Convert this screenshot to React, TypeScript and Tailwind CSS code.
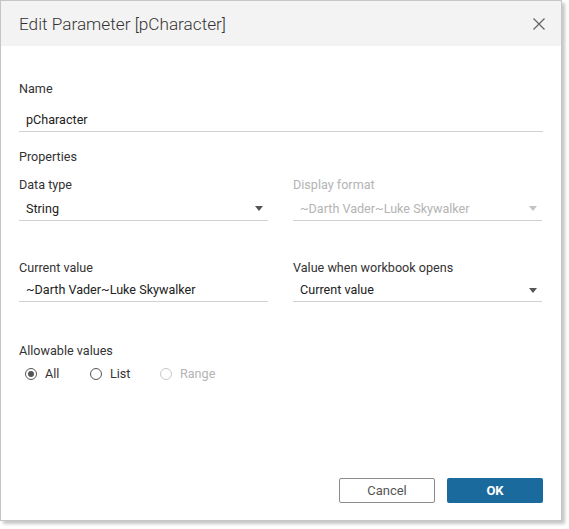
export default function App() {
  const font = { fontFamily: 'Roboto, "Liberation Sans", sans-serif' };

  const Arrow = ({ muted = false }: { muted?: boolean }) => (
    <svg width="8" height="5" viewBox="0 0 8 5" className="shrink-0">
      <path d="M0 0H8L4 5Z" fill={muted ? '#c4c4c4' : '#555555'} />
    </svg>
  );

  const Radio = ({ label, checked = false, disabled = false, width }: { label: string; checked?: boolean; disabled?: boolean; width: string }) => (
    <div className={`flex items-center gap-[8px] ${width}`}>
      <span
        className={`w-[12px] h-[12px] rounded-full border flex items-center justify-center ${
          disabled ? 'border-[#c8c8c8]' : 'border-[#555]'
        }`}
      >
        {checked && <span className="w-[6px] h-[6px] rounded-full bg-[#555]" />}
      </span>
      <span className={disabled ? 'text-[#b4b4b4]' : 'text-[#333]'}>{label}</span>
    </div>
  );

  return (
    <div className="w-[569px] h-[529px] bg-white" style={font}>
      <div className="w-[562px] h-[521px] border border-[#c6c6c6] bg-white flex flex-col shadow-[3px_3px_3px_rgba(0,0,0,0.22)] text-[12.6px] leading-[16px] text-[#333]">
        {/* Header */}
        <div className="h-[45px] bg-[#f3f3f3] flex items-center justify-between pl-[18px] pr-[12px] shrink-0">
          <span className="text-[17.2px] font-light text-[#333]">Edit Parameter [pCharacter]</span>
          <svg width="12" height="12" viewBox="0 0 12 12" className="mr-[4px]">
            <path d="M0.5 0.5L11.5 11.5M11.5 0.5L0.5 11.5" stroke="#666" strokeWidth="1.3" />
          </svg>
        </div>

        {/* Body */}
        <div className="flex-1 px-[18px]">
          <div className="mt-[35px]">Name</div>
          <div className="mt-[11px] h-[24px] border-b border-[#d0d0d0] flex items-center pl-[7px] text-[#222]">pCharacter</div>

          <div className="mt-[17px]">Properties</div>

          <div className="grid grid-cols-2 gap-x-[25px] w-[523px]">
            <div>
              <div className="mt-[12px]">Data type</div>
              <div className="mt-[4px] h-[24px] border-b border-[#d0d0d0] flex items-center justify-between pl-[7px] pr-[5px] text-[#222]">
                <span>String</span>
                <Arrow />
              </div>
              <div className="mt-[39px]">Current value</div>
              <div className="mt-[3px] h-[23px] border-b border-[#d0d0d0] flex items-center pl-[7px] text-[#222]">~Darth Vader~Luke Skywalker</div>
            </div>
            <div>
              <div className="mt-[12px] text-[#b4b4b4]">Display format</div>
              <div className="mt-[4px] h-[24px] border-b border-[#d0d0d0] flex items-center justify-between pl-[7px] pr-[5px] text-[#b4b4b4]">
                <span>~Darth Vader~Luke Skywalker</span>
                <Arrow muted />
              </div>
              <div className="mt-[39px]">Value when workbook opens</div>
              <div className="mt-[3px] h-[23px] border-b border-[#d0d0d0] flex items-center justify-between pl-[7px] pr-[5px] text-[#222]">
                <span>Current value</span>
                <Arrow />
              </div>
            </div>
          </div>

          <div className="mt-[41px]">Allowable values</div>
          <div className="mt-[7px] flex items-center ml-[6px] h-[16px]">
            <Radio label="All" checked width="w-[65px]" />
            <Radio label="List" width="w-[70px]" />
            <Radio label="Range" disabled width="w-[80px]" />
          </div>
        </div>

        {/* Footer */}
        <div className="flex justify-end gap-[12px] pr-[18px] pb-[17px] shrink-0">
          <button className="w-[96px] h-[25px] border border-[#8c8c8c] rounded-[2px] bg-white text-[13px] text-[#555]">Cancel</button>
          <button className="w-[96px] h-[25px] rounded-[2px] bg-[#1b6a9e] text-[13px] font-bold text-white">OK</button>
        </div>
      </div>
    </div>
  );
}
